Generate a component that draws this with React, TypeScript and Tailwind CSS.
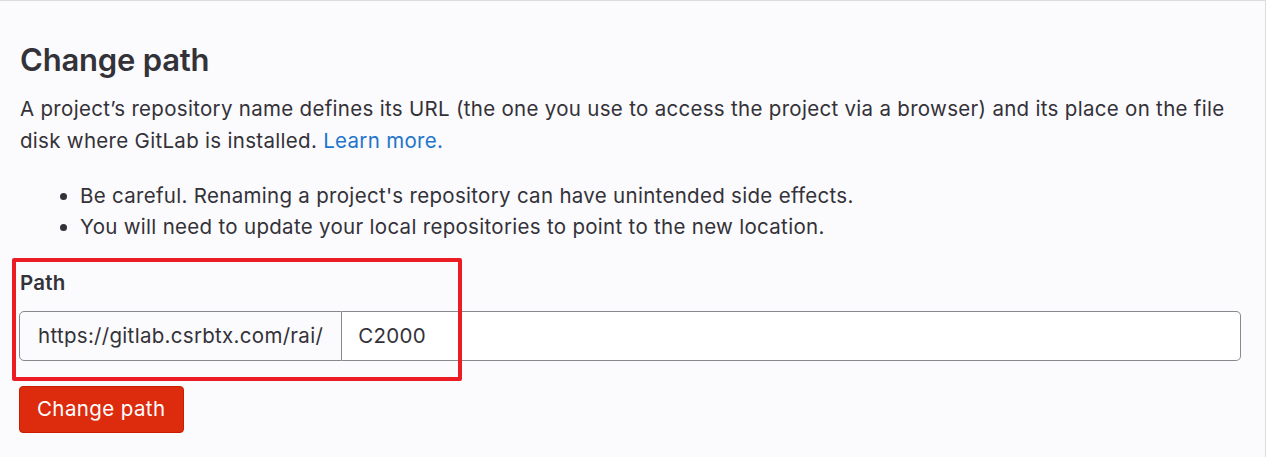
export default function App() {
  return (
    <div className="w-[1266px] min-h-[457px] bg-[#fbfafd] border-t border-r border-[#dcdcde] pl-[19px] pr-[24px] pt-[38px] font-['Inter','Noto_Sans',sans-serif] text-[#333238]">
      <h2 className="text-[31px] font-semibold leading-[42px] tracking-[-0.2px] pl-px">
        Change path
      </h2>
      <p className="mt-[12px] text-[20.5px] leading-[32px] tracking-[0.3px] pl-px">
        A project’s repository name defines its URL (the one you use to access the project via a browser) and its place on the file
        disk where GitLab is installed.{' '}
        <a href="#" className="text-[#1f75cb]">
          Learn more.
        </a>
      </p>
      <ul className="mt-[23px] list-disc pl-[61px] text-[20.5px] leading-[31px] tracking-[0.3px] marker:text-[#333238]">
        <li>Be careful. Renaming a project's repository can have unintended side effects.</li>
        <li>You will need to update your local repositories to point to the new location.</li>
      </ul>

      {/* form group, highlighted with a red annotation box */}
      <div className="relative mt-[17px] pt-[10px] pb-[18px]">
        <div className="pointer-events-none absolute left-[-7px] top-[-1px] h-[123px] w-[450px] rounded-[2px] border-4 border-[#ec1c24]" />
        <label className="block pl-px text-[20.5px] font-semibold leading-[28px] tracking-[0.2px]">Path</label>
        <div className="mt-[14px] flex h-[50px] w-full">
          <div className="flex items-center rounded-l-[5px] border border-[#89888d] bg-[#fbfafd] px-[18px] text-[20.5px] tracking-[0.3px] text-[#333238]">
            https://gitlab.csrbtx.com/rai/
          </div>
          <input
            className="flex-1 rounded-r-[5px] border border-l-0 border-[#89888d] bg-white px-[16px] text-[20.5px] tracking-[0.3px] text-[#333238] outline-none"
            defaultValue="C2000"
          />
        </div>
      </div>

      <button className="mt-[7px] h-[47px] rounded-[4px] border border-[#c91c00] bg-[#dd2b0e] px-[17px] text-[20.5px] tracking-[0.4px] text-white">
        Change path
      </button>
    </div>
  )
}
